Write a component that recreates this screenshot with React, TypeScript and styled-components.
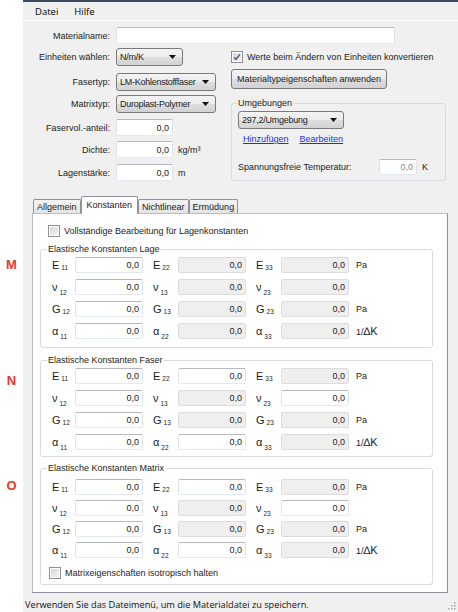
import React from "react";
import styled, { createGlobalStyle } from "styled-components";

const UI = `"Liberation Sans", Arial, sans-serif`;
const SEGOE = `"Open Sans", "Noto Sans", sans-serif`;

const GlobalStyle = createGlobalStyle`
  html, body { margin: 0; padding: 0; background: #ffffff; }
  body { font-family: ${UI}; font-size: 9px; color: #1b1b1b; }
  #root { width: 458px; height: 612px; }
  * { box-sizing: border-box; }
`;

const Page = styled.div`
  display: flex;
  width: 458px;
  height: 612px;
  overflow: hidden;
  background: #ffffff;
`;

const Gutter = styled.div`
  width: 23px;
  flex: none;
  display: flex;
  flex-direction: column;
  align-items: center;
`;

const Marker = styled.div<{ $mt: number }>`
  margin-top: ${(p) => p.$mt}px;
  height: 12px;
  font-family: ${UI};
  font-weight: bold;
  font-size: 13px;
  line-height: 12px;
  color: #e53a2d;
`;

const Window = styled.div`
  flex: 1;
  min-width: 0;
  display: flex;
  flex-direction: column;
  background: #f0f0f0;
  border-top: 2px solid #3c4b5e;
`;

const MenuBar = styled.div`
  height: 19px;
  flex: none;
  display: flex;
  align-items: center;
  padding-left: 12px;
  border-bottom: 1px solid #ffffff;
  font-family: ${SEGOE};
  font-size: 9.5px;
  color: #000;
`;

const MenuItem = styled.span`
  margin-right: 16px;
`;

const Form = styled.div`
  flex: none;
  display: flex;
  flex-direction: column;
  padding-top: 6px;
`;

const Columns = styled.div`
  display: flex;
  margin-top: 4px;
`;

const LeftCol = styled.div`
  width: 208px;
  flex: none;
  display: flex;
  flex-direction: column;
`;

const RightCol = styled.div`
  width: 215px;
  flex: none;
  display: flex;
  flex-direction: column;
  align-items: flex-start;
`;

const Row = styled.div<{ $mt?: number }>`
  display: flex;
  align-items: center;
  margin-top: ${(p) => p.$mt ?? 0}px;
`;

const FieldLabel = styled.label`
  width: 87px;
  margin-right: 6px;
  flex: none;
  text-align: right;
  white-space: nowrap;
`;

const Unit = styled.span`
  margin-left: 5px;
  white-space: nowrap;
`;

const Input = styled.input<{ $w: number; $h?: number; $ro?: boolean; $muted?: boolean; $left?: boolean }>`
  width: ${(p) => p.$w}px;
  height: ${(p) => p.$h ?? 17}px;
  flex: none;
  margin: 0;
  padding: 0 3px;
  font-family: ${UI};
  font-size: 9px;
  text-align: ${(p) => (p.$left ? "left" : "right")};
  color: ${(p) => (p.$muted ? "#8a8a8a" : "#1b1b1b")};
  background: ${(p) => (p.$ro ? "#efefef" : "#ffffff")};
  border: 1px solid;
  border-color: ${(p) => (p.$ro ? "#dcdcdc" : "#b5b8bf #dfe3e8 #e3e9ef #dfe3e8")};
  border-radius: 2px;
  outline: none;
`;

const Combo = styled.div<{ $w: number }>`
  width: ${(p) => p.$w}px;
  height: 18px;
  flex: none;
  display: flex;
  align-items: center;
  justify-content: space-between;
  padding: 0 6px 0 3px;
  border: 1px solid #7a7a7a;
  border-radius: 3px;
  background: linear-gradient(#f3f3f3, #ececec 48%, #dedede 52%, #d2d2d2);
  white-space: nowrap;
  letter-spacing: -0.25px;
`;

const PushButton = styled.button`
  height: 20px;
  margin: 4px 0 0 0;
  padding: 0 5px;
  font-family: ${UI};
  font-size: 9px;
  color: #1b1b1b;
  border: 1px solid #7a7a7a;
  border-radius: 3px;
  background: linear-gradient(#f3f3f3, #ececec 48%, #dedede 52%, #d2d2d2);
`;

const CheckLine = styled.div<{ $h?: number; $ml?: number; $mt?: number }>`
  height: ${(p) => p.$h ?? 13}px;
  margin-left: ${(p) => p.$ml ?? 0}px;
  margin-top: ${(p) => p.$mt ?? 0}px;
  display: flex;
  align-items: center;
  gap: 4px;
  white-space: nowrap;
`;

const CheckBox = styled.span`
  width: 12px;
  height: 12px;
  flex: none;
  display: flex;
  align-items: center;
  justify-content: center;
  border: 1px solid #8f8f8f;
  padding: 1px;
  background: #ffffff;
`;

const CheckInner = styled.span`
  width: 100%;
  height: 100%;
  display: flex;
  align-items: center;
  justify-content: center;
  background: linear-gradient(135deg, #d3d6da, #f4f4f4);
`;

const GroupBox = styled.fieldset<{ $w: number; $mt?: number }>`
  width: ${(p) => p.$w}px;
  margin: ${(p) => p.$mt ?? 0}px 0 0 0;
  padding: 0;
  border: 1px solid #d5dbe0;
  border-radius: 3px;
  min-width: 0;
`;

const GroupTitle = styled.legend<{ $ml: number }>`
  margin-left: ${(p) => p.$ml}px;
  padding: 0 1px;
  font-size: 9px;
  line-height: 12px;
  height: 12px;
`;

const GroupInner = styled.div<{ $pt: number; $pb: number; $pl: number }>`
  padding: ${(p) => p.$pt}px 0 ${(p) => p.$pb}px ${(p) => p.$pl}px;
  display: flex;
  flex-direction: column;
  align-items: flex-start;
`;

const Links = styled.div`
  height: 12px;
  margin: 4px 0 0 5px;
  display: flex;
  align-items: center;
  gap: 11px;
`;

const LinkText = styled.a`
  color: #1a33e0;
  text-decoration: underline;
  cursor: pointer;
`;

const TempLabel = styled.span`
  width: 141px;
  flex: none;
`;

const TabArea = styled.div`
  flex: 1;
  min-height: 0;
  margin: 15px 10px 3px 9px;
  display: flex;
  flex-direction: column;
`;

const TabStrip = styled.div`
  height: 17px;
  flex: none;
  display: flex;
  align-items: flex-end;
  padding-left: 1px;
`;

const Tab = styled.div<{ $active?: boolean }>`
  position: relative;
  z-index: ${(p) => (p.$active ? 1 : 0)};
  height: ${(p) => (p.$active ? 18 : 14)}px;
  margin-bottom: ${(p) => (p.$active ? -1 : 0)}px;
  padding: ${(p) => (p.$active ? "1px 5px 0" : "1px 3px 0")};
  display: flex;
  align-items: ${(p) => (p.$active ? "flex-start" : "center")};
  border: 1px solid #8e9199;
  border-bottom: none;
  border-radius: 2px 2px 0 0;
  background: ${(p) => (p.$active ? "#ffffff" : "linear-gradient(#f4f4f4, #e4e4e4)")};
  white-space: nowrap;
  line-height: 14px;
`;

const Panel = styled.div`
  flex: 1;
  min-height: 0;
  display: flex;
  flex-direction: column;
  align-items: flex-start;
  padding: 10px 0 0 7px;
  background: #ffffff;
  border: 1px solid;
  border-color: #b9bcc2 #8e9199 #8e9199 #b9bcc2;
`;

const ConstGrid = styled.div<{ $gap: number }>`
  display: grid;
  grid-template-columns: 23px 68px 35px 68px 35px 68px auto;
  grid-auto-rows: 16px;
  row-gap: ${(p) => p.$gap}px;
  align-items: center;
`;

const SymCell = styled.div<{ $pad?: boolean }>`
  height: 16px;
  line-height: 16px;
  padding-left: ${(p) => (p.$pad ? 10 : 0)}px;
  white-space: nowrap;
  color: #1b1b1b;
`;

const Sym = styled.span<{ $raised?: boolean }>`
  font-size: 11px;
  vertical-align: ${(p) => (p.$raised ? "3px" : "baseline")};
`;

const Sub = styled.span`
  font-size: 6.5px;
  margin-left: 2px;
  vertical-align: -1px;
`;

const UnitCell = styled.div`
  padding-left: 7px;
  white-space: nowrap;
  font-size: 9px;
`;

const DeltaK = styled.span`
  font-size: 11px;
`;

const StatusBar = styled.div`
  height: 16px;
  flex: none;
  display: flex;
  align-items: center;
  padding-left: 2px;
  font-family: ${SEGOE};
  font-size: 9.2px;
  color: #111;
`;

const Grip = styled.span`
  margin-left: auto;
  margin-right: 2px;
  display: flex;
  align-self: flex-end;
  margin-bottom: 2px;
`;

const Arrow = () => (
  <svg width="7" height="4" viewBox="0 0 7 4">
    <path d="M0 0H7L3.5 4Z" fill="#111" />
  </svg>
);

const Check = () => (
  <svg width="8" height="8" viewBox="0 0 8 8">
    <path d="M1 4.2L3.1 6.3L7 1.4" fill="none" stroke="#4f5f80" strokeWidth="1.5" />
  </svg>
);

const Checkbox = ({ checked }: { checked?: boolean }) => (
  <CheckBox>
    <CheckInner>{checked ? <Check /> : null}</CheckInner>
  </CheckBox>
);

const symbols: { s: string; raised?: boolean; subs: string[]; unit: React.ReactNode }[] = [
  { s: "E", subs: ["11", "22", "33"], unit: "Pa" },
  { s: "ν", raised: true, subs: ["12", "13", "23"], unit: "" },
  { s: "G", subs: ["12", "13", "23"], unit: "Pa" },
  {
    s: "α",
    raised: true,
    subs: ["11", "22", "33"],
    unit: (
      <>
        1/<DeltaK>∆K</DeltaK>
      </>
    ),
  },
];

const ConstantsGroup = ({
  title,
  enabled,
  gap,
  pt,
  pb,
  mt,
  children,
}: {
  title: string;
  enabled: boolean[][];
  gap: number;
  pt: number;
  pb: number;
  mt: number;
  children?: React.ReactNode;
}) => (
  <GroupBox $w={393} $mt={mt}>
    <GroupTitle $ml={6}>{title}</GroupTitle>
    <GroupInner $pt={pt} $pb={pb} $pl={11}>
      <ConstGrid $gap={gap}>
        {symbols.map((row, r) => (
          <React.Fragment key={r}>
            {row.subs.map((sub, c) => (
              <React.Fragment key={c}>
                <SymCell $pad={c > 0}>
                  <Sym $raised={row.raised}>{row.s}</Sym>
                  <Sub>{sub}</Sub>
                </SymCell>
                <Input $w={68} $h={16} $ro={!enabled[r][c]} readOnly value="0,0" />
              </React.Fragment>
            ))}
            <UnitCell>{row.unit}</UnitCell>
          </React.Fragment>
        ))}
      </ConstGrid>
      {children}
    </GroupInner>
  </GroupBox>
);

const lageEnabled = [
  [true, false, false],
  [true, false, false],
  [true, false, false],
  [true, false, false],
];
const faserEnabled = [
  [true, true, false],
  [true, false, true],
  [true, false, false],
  [true, true, false],
];

const GripDots = () => (
  <svg width="8" height="9" viewBox="0 0 8 9">
    {[
      [6, 1],
      [6, 4],
      [3, 4],
      [6, 7],
      [3, 7],
      [0, 7],
    ].map(([x, y], i) => (
      <rect key={i} x={x} y={y} width="1.5" height="1.5" fill="#a4a4a4" />
    ))}
  </svg>
);

export default function App() {
  return (
    <>
      <GlobalStyle />
      <Page>
        <Gutter>
          <Marker $mt={259}>M</Marker>
          <Marker $mt={104}>N</Marker>
          <Marker $mt={93}>O</Marker>
        </Gutter>
        <Window>
          <MenuBar>
            <MenuItem>Datei</MenuItem>
            <MenuItem>Hilfe</MenuItem>
          </MenuBar>
          <Form>
            <Row>
              <FieldLabel>Materialname:</FieldLabel>
              <Input $w={279} $h={17} readOnly value="" $left />
            </Row>
            <Columns>
              <LeftCol>
                <Row>
                  <FieldLabel>Einheiten wählen:</FieldLabel>
                  <Combo $w={67}>
                    N/m/K <Arrow />
                  </Combo>
                </Row>
                <Row $mt={7}>
                  <FieldLabel>Fasertyp:</FieldLabel>
                  <Combo $w={100}>
                    LM-Kohlenstofffaser <Arrow />
                  </Combo>
                </Row>
                <Row $mt={4}>
                  <FieldLabel>Matrixtyp:</FieldLabel>
                  <Combo $w={100}>
                    Duroplast-Polymer <Arrow />
                  </Combo>
                </Row>
                <Row $mt={6}>
                  <FieldLabel>Faservol.-anteil:</FieldLabel>
                  <Input $w={57} readOnly value="0,0" />
                </Row>
                <Row $mt={5}>
                  <FieldLabel>Dichte:</FieldLabel>
                  <Input $w={57} readOnly value="0,0" />
                  <Unit>kg/m³</Unit>
                </Row>
                <Row $mt={6}>
                  <FieldLabel>Lagenstärke:</FieldLabel>
                  <Input $w={57} readOnly value="0,0" />
                  <Unit>m</Unit>
                </Row>
              </LeftCol>
              <RightCol>
                <CheckLine $h={17}>
                  <Checkbox checked />
                  Werte beim Ändern von Einheiten konvertieren
                </CheckLine>
                <PushButton>Materialtypeigenschaften anwenden</PushButton>
                <GroupBox $w={215} $mt={8}>
                  <GroupTitle $ml={5}>Umgebungen</GroupTitle>
                  <GroupInner $pt={2} $pb={5} $pl={6}>
                    <Combo $w={106}>
                      297,2/Umgebung <Arrow />
                    </Combo>
                    <Links>
                      <LinkText>Hinzufügen</LinkText>
                      <LinkText>Bearbeiten</LinkText>
                    </Links>
                    <Row $mt={14}>
                      <TempLabel>Spannungsfreie Temperatur:</TempLabel>
                      <Input $w={38} $h={16} readOnly value="0,0" $muted />
                      <Unit>K</Unit>
                    </Row>
                  </GroupInner>
                </GroupBox>
              </RightCol>
            </Columns>
          </Form>
          <TabArea>
            <TabStrip>
              <Tab>Allgemein</Tab>
              <Tab $active>Konstanten</Tab>
              <Tab>Nichtlinear</Tab>
              <Tab>Ermüdung</Tab>
            </TabStrip>
            <Panel>
              <CheckLine $ml={8}>
                <Checkbox />
                Vollständige Bearbeitung für Lagenkonstanten
              </CheckLine>
              <ConstantsGroup title="Elastische Konstanten Lage" enabled={lageEnabled} gap={6} pt={2} pb={8} mt={6} />
              <ConstantsGroup title="Elastische Konstanten Faser" enabled={faserEnabled} gap={6} pt={2} pb={6} mt={6} />
              <ConstantsGroup title="Elastische Konstanten Matrix" enabled={faserEnabled} gap={5} pt={5} pb={5} mt={5}>
                <CheckLine $ml={-3} $mt={8}>
                  <Checkbox />
                  Matrixeigenschaften isotropisch halten
                </CheckLine>
              </ConstantsGroup>
            </Panel>
          </TabArea>
          <StatusBar>
            Verwenden Sie das Dateimenü, um die Materialdatei zu speichern.
            <Grip>
              <GripDots />
            </Grip>
          </StatusBar>
        </Window>
      </Page>
    </>
  );
}
